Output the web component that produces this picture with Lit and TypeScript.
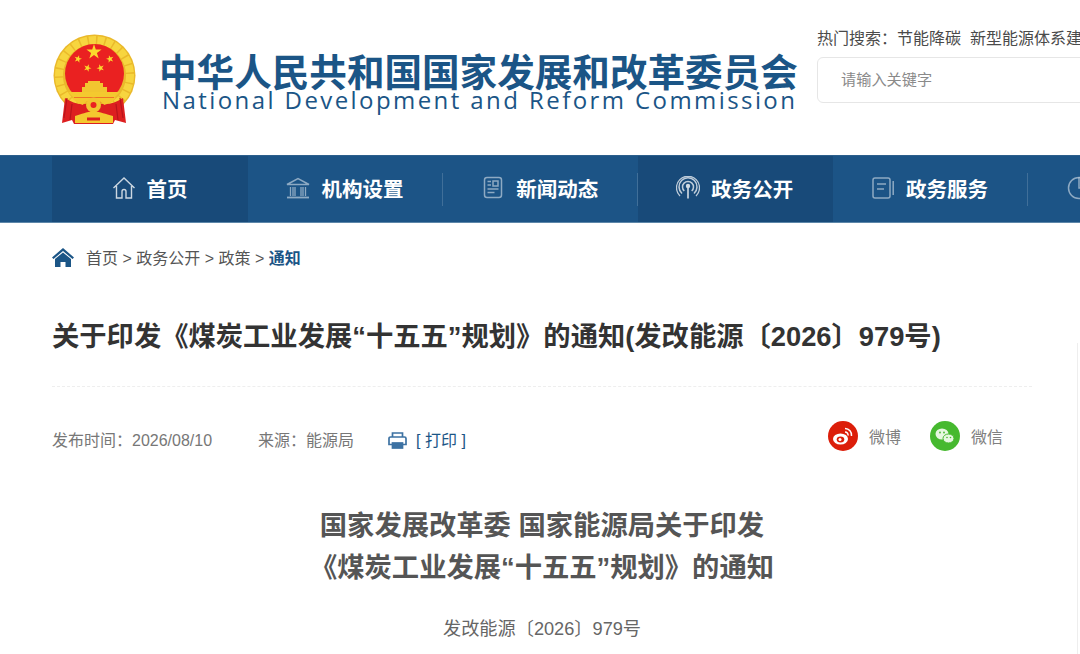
import { LitElement, html, css, svg } from "lit";
import { customElement } from "lit/decorators.js";

const star = (cx: number, cy: number, r: number, rot = 0) => {
  const pts: string[] = [];
  for (let i = 0; i < 10; i++) {
    const a = ((-90 + rot + i * 36) * Math.PI) / 180;
    const rr = i % 2 ? r * 0.382 : r;
    pts.push(`${(cx + rr * Math.cos(a)).toFixed(2)},${(cy + rr * Math.sin(a)).toFixed(2)}`);
  }
  return svg`<polygon points=${pts.join(" ")} fill="#fbd92c"/>`;
};

const emblem = html`<svg class="emblem" viewBox="0 0 84 94" width="84" height="94">
  <circle cx="42.500" cy="43.500" r="41" fill="#eab92b"/>
  <circle cx="42.500" cy="43.500" r="35.500" fill="none" stroke="#f7d53f" stroke-width="8" stroke-dasharray="7 1.500"/>
  <circle cx="42.500" cy="41.500" r="29.500" fill="#ea2121"/>
  ${star(42, 20, 8)} ${star(26, 27, 4, 15)} ${star(58, 27, 4, -15)} ${star(35.500, 36, 4, 20)} ${star(48.500, 36, 4, -20)}
  <path d="M30 60 V55 H33 V51 H36 V49 H48 V51 H51 V55 H55 V60Z" fill="#f2c530"/>
  <path d="M16 60 H68 L62 66 H22Z" fill="#f4c92f"/>
  <rect x="22" y="65.500" width="40" height="2" fill="#ea2121"/>
  <path d="M13 66 C22 72 30 74 41.500 70 C53 74 62 72 71 66 L74 91 L63 88 L61 92 H22 L20 88 L10 91Z" fill="#dd1f20"/>
  <path d="M15 66 L12 86 M68 66 L71 86 M20 72 L18 88 M64 72 L66 88" stroke="#b8141b" stroke-width="1.200" fill="none"/>
  <path d="M20 66 H64 C60 70 56 72 52 73 C50 67 33 67 31 73 C27 72 24 70 20 66Z" fill="#f4c92f"/>
  <circle cx="41.500" cy="73" r="7.500" fill="#f2c530"/>
  <circle cx="41.500" cy="73" r="3" fill="#ea2121"/>
  <path d="M23 84 C30 82 34 80 41.500 79 C49 80 53 82 61 84 V91 H23Z" fill="#f4c92f"/>
  <rect x="35" y="85.500" width="13" height="3" fill="#dd1f20"/>
</svg>`;

const stroke = "rgba(255,255,255,.5)";
const icons = {
  home: html`<svg class="ni" viewBox="0 0 24 24" fill="none" stroke="rgba(255,255,255,.78)" stroke-width="1.400"><path d="M1.500 12 12 2l10.500 10M4.500 10v12H10v-6.500a2 2 0 0 1 4 0V22h5.500V10"/></svg>`,
  inst: html`<svg class="ni" viewBox="0 0 24 24" fill="none" stroke=${stroke} stroke-width="1.500"><path d="M1 8.500 12 2.500l11 6Z"/><path d="M4.500 11v9M9 11v9M15 11v9M19.500 11v9M7 11v9M17 11v9" stroke-width="1.300"/><path d="M1 21.500h22" stroke-width="1.800"/></svg>`,
  news: html`<svg class="ni" viewBox="0 0 24 24" fill="none" stroke=${stroke} stroke-width="1.500"><rect x="3.500" y="1.500" width="17" height="20" rx="2.500"/><rect x="12" y="5" width="5" height="5"/><path d="M6.500 5.500H10M6.500 9H10M6.500 13h11M6.500 16.500h7"/></svg>`,
  gov: html`<svg class="ni" viewBox="0 0 24 24" fill="none" stroke="rgba(255,255,255,.72)" stroke-width="1.500"><circle cx="12" cy="10" r="2.200" fill="rgba(255,255,255,.8)" stroke="none"/><path d="M12 12v10.500" stroke-width="1.800"/><path d="M8.300 15a5.500 5.500 0 1 1 7.400 0"/><path d="M6 17.500a9 9 0 1 1 12 0"/><path d="M4 20a11.500 11.500 0 1 1 16 0" stroke-width="1.300"/></svg>`,
  svc: html`<svg class="ni" viewBox="0 0 24 24" fill="none" stroke=${stroke} stroke-width="1.500"><rect x="2" y="2" width="17" height="20" rx="2"/><path d="M6 8h9M6 13h7M22.200 5v14"/></svg>`,
  clock: html`<svg class="ni" viewBox="0 0 24 24" fill="none" stroke=${stroke} stroke-width="1.500"><circle cx="12" cy="12" r="10.500"/><path d="M12 1.500V12h10"/></svg>`,
};

const nav = [
  { t: "首页", i: icons.home, active: true },
  { t: "机构设置", i: icons.inst },
  { t: "新闻动态", i: icons.news },
  { t: "政务公开", i: icons.gov, active: true },
  { t: "政务服务", i: icons.svc },
  { t: "", i: icons.clock },
];

@customElement("app-root")
export class AppRoot extends LitElement {
  static styles = css`
    :host { display: block; width: 1080px; height: 654px; overflow: hidden; position: relative; background: #fff;
      font-family: "Liberation Sans", "Noto Sans CJK SC", sans-serif; color: #333; }
    .head { height: 155px; display: flex; padding-left: 52px; box-sizing: border-box; }
    .emblem { margin-top: 32px; flex: none; width: 84px; height: 94px; }
    .brand { margin-left: 24px; width: 657px; flex: none; color: #1b5586; padding-top: 52px; white-space: nowrap; }
    .cn { font-size: 37.600px; line-height: 36px; font-weight: 700; margin-left: -1px; font-family: "Noto Sans CJK SC", sans-serif; }
    .en { font-size: 24px; line-height: 24px; letter-spacing: 2.420px; padding-left: 2px; font-family: "Open Sans", sans-serif; }
    .side { padding-top: 28px; white-space: nowrap; flex: none; width: 263px; overflow: hidden; }
    .hot { font-size: 16px; line-height: 21px; color: #4a4a4a; }
    .hot span { margin-left: 9px; }
    .search { margin-top: 8px; height: 46px; width: 300px; box-sizing: border-box; border: 1px solid #e6e6e6; border-radius: 6px;
      padding: 0 23px; line-height: 43px; font-size: 15.200px; color: #8a8a8a; }
    .nav { height: 68px; background: #1c5486; display: flex; padding-left: 52px; box-sizing: border-box;
      border-top: 1px solid #2c5f8c; border-bottom: 1px solid #5d87a9; overflow: hidden; }
    .item { width: 194.900px; flex: none; display: flex; align-items: center; justify-content: center; gap: 11px; position: relative;
      color: #fff; font-size: 20.500px; font-weight: 700; box-sizing: border-box; padding: 0 1px 2px 0; }
    .item:first-child { width: 196px; }
    .item.on { background: #184a79; }
    .item.last { justify-content: flex-start; padding-left: 39px; }
    .item:not(.on):not(.last)::after { content: ""; position: absolute; right: 0; top: 17px; height: 33px; width: 1px; background: rgba(255,255,255,.16); }
    .ni { width: 24px; height: 24px; flex: none; }
    .main { padding: 0 48px 0 52px; }
    .crumb { display: flex; align-items: center; height: 68px; font-size: 16px; color: #555; white-space: pre; }
    .crumb svg { width: 22px; height: 19px; margin-right: 12px; flex: none; }
    .crumb b { color: #1b5586; }
    .title { margin-top: 24px; font-size: 27.300px; line-height: 44px; font-weight: 700; color: #333; white-space: nowrap; }
    .rule { margin-top: 27px; border-top: 1px dashed #eee; width: 980px; }
    .meta { display: flex; align-items: center; height: 42px; margin-top: 31px; font-size: 16px; color: #777; white-space: nowrap; }
    .meta .src { margin-left: 46px; }
    .print { margin-left: 34px; display: flex; align-items: center; color: #1b5586; }
    .print svg { width: 19px; height: 17px; margin-right: 9px; margin-top: 2px; }
    .share { margin-left: auto; margin-right: 29px; display: flex; gap: 29px; margin-top: -6px; }
    .share div { display: flex; align-items: center; gap: 11px; font-size: 16px; color: #808080; }
    .share svg { width: 30px; height: 30px; }
    .doc { text-align: center; color: #555; margin-top: 45px; width: 980px; }
    .doc h1 { margin: 0; font-size: 27.300px; line-height: 42px; font-weight: 700; }
    .num { margin-top: 25px; font-size: 18.200px; line-height: 30px; color: #666; }
    .edge { position: absolute; right: 2px; top: 343px; bottom: 0; width: 1px; background: #eee; }
  `;

  render() {
    return html`
      <div class="head">
        ${emblem}
        <div class="brand">
          <div class="cn">中华人民共和国国家发展和改革委员会</div>
          <div class="en">National Development and Reform Commission</div>
        </div>
        <div class="side">
          <div class="hot">热门搜索：节能降碳<span>新型能源体系建设</span></div>
          <div class="search">请输入关键字</div>
        </div>
      </div>
      <div class="nav">
        ${nav.map((n) => html`<div class="item ${n.active ? "on" : ""} ${n.t ? "" : "last"}">${n.i}${n.t ? html`<span>${n.t}</span>` : ""}</div>`)}
      </div>
      <div class="main">
        <div class="crumb">
          <svg viewBox="0 0 22 19"><path d="M11 0 22 9.500 20.500 11 11 3 1.500 11 0 9.500Z M11 4.500 19 11v8h-5.500v-5h-5v5H3v-8Z" fill="#1b5586"/></svg>
          <span>首页 &gt; 政务公开 &gt; 政策 &gt; <b>通知</b></span>
        </div>
        <div class="title">关于印发《煤炭工业发展“十五五”规划》的通知(发改能源〔2026〕979号)</div>
        <div class="rule"></div>
        <div class="meta">
          <span>发布时间：2026/08/10</span>
          <span class="src">来源：能源局</span>
          <span class="print">
            <svg viewBox="0 0 19 17" fill="none" stroke="#3d72a3" stroke-width="1.700"><path d="M4.500 5V1h10v4"/><path d="M4 12.500H1V6.500a1.500 1.500 0 0 1 1.500-1.500h14a1.500 1.500 0 0 1 1.500 1.500v6h-3"/><rect x="4.500" y="11" width="10" height="5" fill="#3d72a3"/></svg>
            <span>[ 打印 ]</span>
          </span>
          <div class="share">
            <div>
              <svg viewBox="0 0 30 30"><circle cx="15" cy="15" r="15" fill="#dc1e0a"/><ellipse cx="12.500" cy="18" rx="7.500" ry="5.500" fill="#fff"/><ellipse cx="12.500" cy="18.500" rx="3.800" ry="3" fill="#dc1e0a"/><circle cx="12" cy="18.500" r="1.500" fill="#fff"/><path d="M17 7.500a6.500 6.500 0 0 1 6.500 7.500M17 11a3 3 0 0 1 3 3.500" stroke="#fff" stroke-width="1.500" fill="none"/></svg>
              <span>微博</span>
            </div>
            <div>
              <svg viewBox="0 0 30 30"><circle cx="15" cy="15" r="15" fill="#46b92f"/><ellipse cx="12" cy="13" rx="6.500" ry="5.500" fill="#e6f7e0"/><ellipse cx="18.500" cy="17.500" rx="5.500" ry="4.500" fill="#e6f7e0" stroke="#46b92f"/><circle cx="10" cy="11.500" r=".9" fill="#46b92f"/><circle cx="14" cy="11.500" r=".9" fill="#46b92f"/><circle cx="17" cy="16.500" r=".8" fill="#46b92f"/><circle cx="20.500" cy="16.500" r=".8" fill="#46b92f"/></svg>
              <span>微信</span>
            </div>
          </div>
        </div>
        <div class="doc">
          <h1>国家发展改革委 国家能源局关于印发</h1>
          <h1>《煤炭工业发展“十五五”规划》的通知</h1>
          <div class="num">发改能源〔2026〕979号</div>
        </div>
      </div>
      <div class="edge"></div>
    `;
  }
}
